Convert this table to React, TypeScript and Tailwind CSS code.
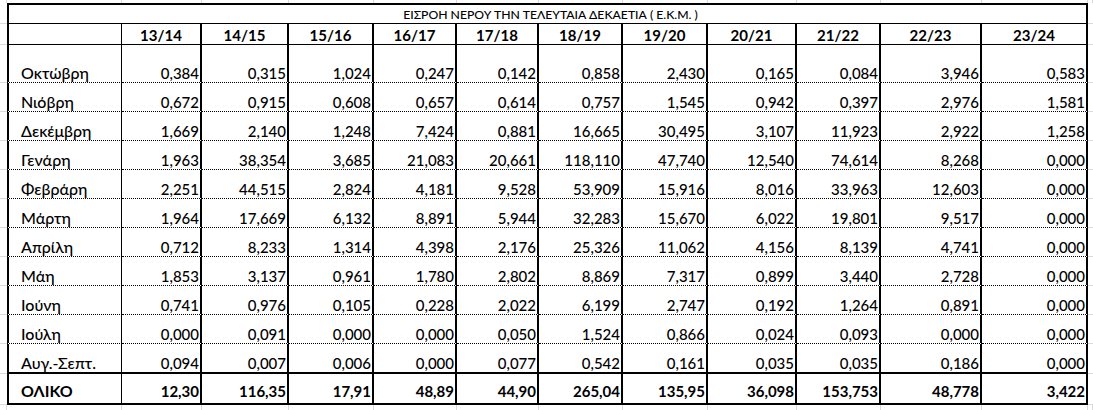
import React from 'react';

const years = ['13/14', '14/15', '15/16', '16/17', '17/18', '18/19', '19/20', '20/21', '21/22', '22/23', '23/24'];

const rows: string[][] = [
  ['Οκτώβρη', '0,384', '0,315', '1,024', '0,247', '0,142', '0,858', '2,430', '0,165', '0,084', '3,946', '0,583'],
  ['Νιόβρη', '0,672', '0,915', '0,608', '0,657', '0,614', '0,757', '1,545', '0,942', '0,397', '2,976', '1,581'],
  ['Δεκέμβρη', '1,669', '2,140', '1,248', '7,424', '0,881', '16,665', '30,495', '3,107', '11,923', '2,922', '1,258'],
  ['Γενάρη', '1,963', '38,354', '3,685', '21,083', '20,661', '118,110', '47,740', '12,540', '74,614', '8,268', '0,000'],
  ['Φεβράρη', '2,251', '44,515', '2,824', '4,181', '9,528', '53,909', '15,916', '8,016', '33,963', '12,603', '0,000'],
  ['Μάρτη', '1,964', '17,669', '6,132', '8,891', '5,944', '32,283', '15,670', '6,022', '19,801', '9,517', '0,000'],
  ['Απρίλη', '0,712', '8,233', '1,314', '4,398', '2,176', '25,326', '11,062', '4,156', '8,139', '4,741', '0,000'],
  ['Μάη', '1,853', '3,137', '0,961', '1,780', '2,802', '8,869', '7,317', '0,899', '3,440', '2,728', '0,000'],
  ['Ιούνη', '0,741', '0,976', '0,105', '0,228', '2,022', '6,199', '2,747', '0,192', '1,264', '0,891', '0,000'],
  ['Ιούλη', '0,000', '0,091', '0,000', '0,000', '0,050', '1,524', '0,866', '0,024', '0,093', '0,000', '0,000'],
  ['Αυγ.-Σεπτ.', '0,094', '0,007', '0,006', '0,000', '0,077', '0,542', '0,161', '0,035', '0,035', '0,186', '0,000'],
];

const totals = ['ΟΛΙΚΟ', '12,30', '116,35', '17,91', '48,89', '44,90', '265,04', '135,95', '36,098', '153,753', '48,778', '3,422'];

// 14 sheet columns: margin, label, 11 years, margin
const sheetCols = Array.from({ length: 14 }, (_, i) => i);

function sideBorders(ci: number): string {
  return ci === 0 ? 'border-l-2 border-r' : 'border-r-2';
}

// faint excel gridlines around the bordered table
function MarginRow({ id }: { id: string }) {
  return (
    <>
      {sheetCols.map((i) => (
        <div key={`${id}-${i}`} className="border-r border-[#dadada]" />
      ))}
    </>
  );
}

function Gutter() {
  return <div className="border-b border-[#dadada]" />;
}

export default function App() {
  const lastData = rows.length - 1;

  return (
    <div className="h-[410px] w-[1093px] overflow-hidden bg-white font-['Lato','Noto_Sans',sans-serif] text-black">
      <div className="grid grid-cols-[7px_115px_80px_87px_85px_83px_82px_84px_85px_89px_84px_101px_106px_5px] grid-rows-[3px_21px_21px_38px_repeat(9,29px)_30px_31px_5px]">
        <MarginRow id="top" />

        {/* title */}
        <Gutter />
        <div className="col-span-12 flex items-end justify-center border-x-2 border-t-2 border-b border-black pl-[6px] text-[12.2px] font-medium leading-[16px]">
          ΕΙΣΡΟΗ ΝΕΡΟΥ ΤΗΝ ΤΕΛΕΥΤΑΙΑ ΔΕΚΑΕΤΙΑ ( Ε.Κ.Μ. )
        </div>
        <Gutter />

        {/* year header */}
        <Gutter />
        <div className="border-l-2 border-r border-b border-black" />
        {years.map((y) => (
          <div
            key={y}
            className="flex items-end justify-center border-r-2 border-b border-black text-[15px] font-bold leading-[18px]"
          >
            {y}
          </div>
        ))}
        <Gutter />

        {/* months */}
        {rows.map((row, ri) => (
          <React.Fragment key={row[0]}>
            <Gutter />
            {row.map((val, ci) => (
              <div
                key={`${ri}-${ci}`}
                className={`flex items-end border-black font-medium leading-[18px] ${sideBorders(ci)} ${
                  ri === lastData ? 'border-b-2' : 'border-b [border-bottom-style:dotted]'
                } ${ci === 0 ? 'justify-start pl-[12px] text-[16px]' : 'justify-end pr-px text-[15px]'}`}
              >
                {val}
              </div>
            ))}
            <Gutter />
          </React.Fragment>
        ))}

        {/* totals */}
        <Gutter />
        {totals.map((val, ci) => (
          <div
            key={`t-${ci}`}
            className={`flex items-end border-b-2 border-black pb-[3px] font-bold leading-[18px] ${sideBorders(ci)} ${
              ci === 0 ? 'justify-start pl-[12px] text-[16px]' : 'justify-end pr-px text-[15px]'
            }`}
          >
            {val}
          </div>
        ))}
        <Gutter />

        <MarginRow id="bottom" />
      </div>
    </div>
  );
}
